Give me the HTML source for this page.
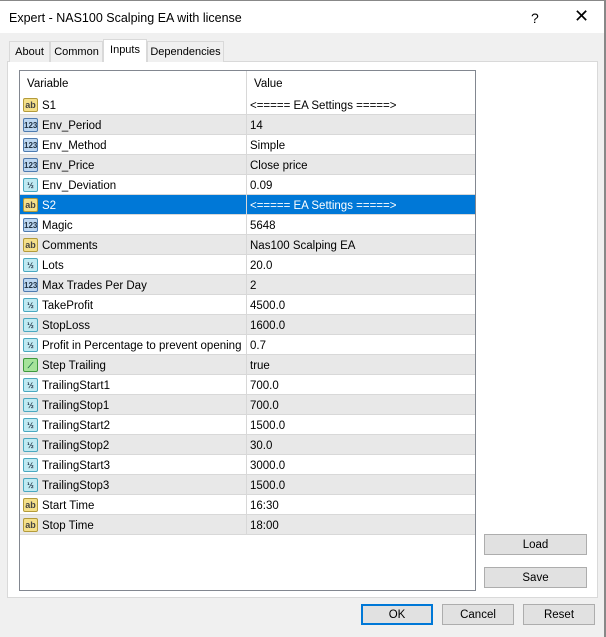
<!DOCTYPE html><html><head><style>
*{margin:0;padding:0;box-sizing:border-box}
body{width:606px;height:637px;background:#f0f0f0;font-family:"Liberation Sans",sans-serif;font-size:11.5px;color:#000;position:relative;overflow:hidden}
.abs{position:absolute}
.title{left:0;top:0;width:604px;height:33px;background:#fff;border-top:1px solid #888}
.tab{top:41px;height:21px;border:1px solid #d9d9d9;border-bottom:none;background:#f0f0f0;text-align:center;line-height:21px;font-size:11px}
.panel{left:7px;top:61px;width:591px;height:537px;background:#fff;border:1px solid #d9d9d9}
.list{left:19px;top:70px;width:457px;height:521px;border:1px solid #828790;background:#fff;overflow:hidden}
.row{position:absolute;left:0;width:455px;height:20px;border-bottom:1px solid #d8d8d8;line-height:22px}
.row .n{position:absolute;left:22px;width:200px;white-space:nowrap;overflow:hidden}
.row .v{position:absolute;left:226px;border-left:1px solid #d8d8d8;height:20px;padding-left:3px;width:230px}
.g{background:#e8e8e8}
.sel{background:#0078d7;color:#fff}
.ic{position:absolute;left:3px;top:3px;width:15px;height:14px;border-radius:2px;font-size:8px;line-height:13px;text-align:center;font-weight:bold}
.ab{background:#f4e08a;border:1px solid #b49b3a;color:#444;font-size:9px}
.n1{background:#bcd6f0;border:1px solid #4d7bb0;color:#234}
.fr{background:#bfeaf2;border:1px solid #4aa8c0;color:#234}
.bo{background:#a6e39a;border:1px solid #3d9a3d;color:#164}
.btn{height:21px;background:#e1e1e1;border:1px solid #adadad;text-align:center;line-height:21px}
</style></head><body>
<div class="abs title"><span class="abs" style="left:9px;top:10px;font-size:12.5px">Expert - NAS100 Scalping EA with license</span><span class="abs" style="left:531px;top:9px;font-size:14px">?</span><span class="abs" style="left:574px;top:5px;font-size:18px">✕</span></div>
<div class="abs" style="left:604px;top:0;width:2px;height:637px;background:#888"></div>
<div class="abs panel"></div>
<div class="abs tab" style="left:9px;width:41px">About</div>
<div class="abs tab" style="left:50px;width:53px">Common</div>
<div class="abs tab" style="left:103px;top:39px;height:23px;width:44px;background:#fff;line-height:21px">Inputs</div>
<div class="abs tab" style="left:147px;width:77px">Dependencies</div>
<div class="abs list">
<div class="row" style="top:0;height:24px;line-height:26px;border-bottom:none"><span class="abs" style="left:7px">Variable</span><span class="v" style="height:24px;left:226px;padding-left:7px">Value</span></div>
<div style="position:absolute;top:24px;left:0;width:457px">
<div class="row" style="top:0"><span class="ic ab">ab</span><span class="n">S1</span><span class="v">&lt;===== EA Settings =====&gt;</span></div>
<div class="row g" style="top:20px"><span class="ic n1">123</span><span class="n">Env_Period</span><span class="v">14</span></div>
<div class="row" style="top:40px"><span class="ic n1">123</span><span class="n">Env_Method</span><span class="v">Simple</span></div>
<div class="row g" style="top:60px"><span class="ic n1">123</span><span class="n">Env_Price</span><span class="v">Close price</span></div>
<div class="row" style="top:80px"><span class="ic fr">½</span><span class="n">Env_Deviation</span><span class="v">0.09</span></div>
<div class="row sel" style="top:100px"><span class="ic ab">ab</span><span class="n">S2</span><span class="v">&lt;===== EA Settings =====&gt;</span></div>
<div class="row" style="top:120px"><span class="ic n1">123</span><span class="n">Magic</span><span class="v">5648</span></div>
<div class="row g" style="top:140px"><span class="ic ab">ab</span><span class="n">Comments</span><span class="v">Nas100 Scalping EA</span></div>
<div class="row" style="top:160px"><span class="ic fr">½</span><span class="n">Lots</span><span class="v">20.0</span></div>
<div class="row g" style="top:180px"><span class="ic n1">123</span><span class="n">Max Trades Per Day</span><span class="v">2</span></div>
<div class="row" style="top:200px"><span class="ic fr">½</span><span class="n">TakeProfit</span><span class="v">4500.0</span></div>
<div class="row g" style="top:220px"><span class="ic fr">½</span><span class="n">StopLoss</span><span class="v">1600.0</span></div>
<div class="row" style="top:240px"><span class="ic fr">½</span><span class="n">Profit in Percentage to prevent opening ...</span><span class="v">0.7</span></div>
<div class="row g" style="top:260px"><span class="ic bo">⟋</span><span class="n">Step Trailing</span><span class="v">true</span></div>
<div class="row" style="top:280px"><span class="ic fr">½</span><span class="n">TrailingStart1</span><span class="v">700.0</span></div>
<div class="row g" style="top:300px"><span class="ic fr">½</span><span class="n">TrailingStop1</span><span class="v">700.0</span></div>
<div class="row" style="top:320px"><span class="ic fr">½</span><span class="n">TrailingStart2</span><span class="v">1500.0</span></div>
<div class="row g" style="top:340px"><span class="ic fr">½</span><span class="n">TrailingStop2</span><span class="v">30.0</span></div>
<div class="row" style="top:360px"><span class="ic fr">½</span><span class="n">TrailingStart3</span><span class="v">3000.0</span></div>
<div class="row g" style="top:380px"><span class="ic fr">½</span><span class="n">TrailingStop3</span><span class="v">1500.0</span></div>
<div class="row" style="top:400px"><span class="ic ab">ab</span><span class="n">Start Time</span><span class="v">16:30</span></div>
<div class="row g" style="top:420px"><span class="ic ab">ab</span><span class="n">Stop Time</span><span class="v">18:00</span></div>
</div></div>
<div class="abs btn" style="left:484px;top:534px;width:103px">Load</div>
<div class="abs btn" style="left:484px;top:567px;width:103px">Save</div>
<div class="abs btn" style="left:361px;top:604px;width:72px;border:2px solid #0078d7;line-height:19px">OK</div>
<div class="abs btn" style="left:442px;top:604px;width:72px">Cancel</div>
<div class="abs btn" style="left:523px;top:604px;width:72px">Reset</div>
</body></html>
